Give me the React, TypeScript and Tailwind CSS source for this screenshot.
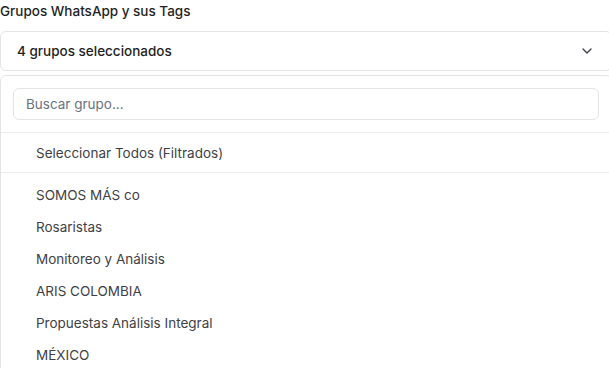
import React from "react";
import { ChevronDown } from "lucide-react";

const groups = [
  "SOMOS MÁS co",
  "Rosaristas",
  "Monitoreo y Análisis",
  "ARIS COLOMBIA",
  "Propuestas Análisis Integral",
  "MÉXICO",
];

export default function App() {
  return (
    <div
      className="w-[609px] h-[368px] overflow-hidden bg-white text-[#1f1f23]"
      style={{ fontFamily: "Inter, 'Noto Sans', sans-serif" }}
    >
      <div className="w-[612px] flex flex-col">
        <label className="block text-[13.5px] font-medium leading-5 pt-[1px] mb-[10px]">
          Grupos WhatsApp y sus Tags
        </label>
        <button className="h-10 w-full flex items-center justify-between rounded-md border border-[#e4e4e7] bg-white px-4 text-[13.5px] font-medium text-[#1f1f23]">
          <span>4 grupos seleccionados</span>
          <ChevronDown className="h-4 w-4 text-[#3f3f46]" strokeWidth={2} />
        </button>
        <div className="mt-1 rounded-md border border-[#e4e4e7] bg-white">
          <div className="p-3 border-b border-[#ececef]">
            <div className="h-8 w-full rounded-md border border-[#e4e4e7] px-3 flex items-center text-[13.5px] text-[#6b7280]">
              Buscar grupo...
            </div>
          </div>
          <div className="h-10 flex items-center pl-[35px] pt-[2px] text-[13.5px] text-[#3f3f46] border-b border-[#ececef]">
            Seleccionar Todos (Filtrados)
          </div>
          <div className="pt-[6px] pb-1">
            {groups.map((g) => (
              <div key={g} className="h-8 flex items-center pl-[35px] text-[13.5px] text-[#3f3f46]">
                {g}
              </div>
            ))}
          </div>
        </div>
      </div>
    </div>
  );
}
